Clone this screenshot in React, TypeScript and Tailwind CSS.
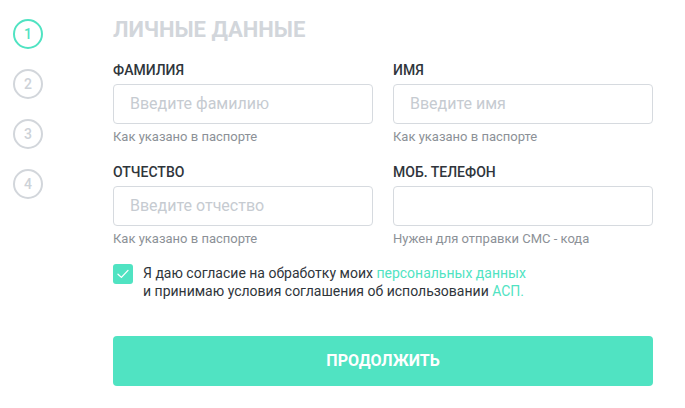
import React from "react";

function Field({ label, placeholder, hint }: { label: string; placeholder: string; hint: string }) {
  return (
    <div className="flex flex-col">
      <div className="text-[14px] leading-[20px] font-medium text-[#2f353b]">{label}</div>
      <div className="mt-[4px] h-[40px] rounded-[4px] border border-[#d6dadf] bg-white flex items-center px-[16px]">
        <span className="text-[16px] text-[#c6cbd1]">{placeholder}</span>
      </div>
      <div className="mt-[5px] text-[13px] leading-[16px] text-[#8c9197]">{hint}</div>
    </div>
  );
}

export default function App() {
  return (
    <div className="w-[685px] h-[408px] bg-white flex font-['Roboto',sans-serif]">
      <div className="w-[113px] shrink-0 pl-[13px] pt-[19px] flex flex-col gap-[20px]">
        <div className="w-[30px] h-[30px] rounded-full border-2 border-[#50e3c2] flex items-center justify-center text-[14px] font-medium text-[#50e3c2]">1</div>
        <div className="w-[30px] h-[30px] rounded-full border-2 border-[#d2d6db] flex items-center justify-center text-[14px] font-medium text-[#cdd2d8]">2</div>
        <div className="w-[30px] h-[30px] rounded-full border-2 border-[#d2d6db] flex items-center justify-center text-[14px] font-medium text-[#cdd2d8]">3</div>
        <div className="w-[30px] h-[30px] rounded-full border-2 border-[#d2d6db] flex items-center justify-center text-[14px] font-medium text-[#cdd2d8]">4</div>
      </div>
      <div className="w-[540px] shrink-0 pt-[18px] flex flex-col">
        <div className="text-[22px] leading-[24px] font-bold text-[#d2d6db]">ЛИЧНЫЕ ДАННЫЕ</div>
        <div className="mt-[18px] grid grid-cols-2 gap-x-[20px] gap-y-[17px]">
          <Field label="ФАМИЛИЯ" placeholder="Введите фамилию" hint="Как указано в паспорте" />
          <Field label="ИМЯ" placeholder="Введите имя" hint="Как указано в паспорте" />
          <Field label="ОТЧЕСТВО" placeholder="Введите отчество" hint="Как указано в паспорте" />
          <Field label="МОБ. ТЕЛЕФОН" placeholder="" hint="Нужен для отправки СМС - кода" />
        </div>
        <div className="mt-[17px] flex items-start gap-[10px]">
          <div className="w-[20px] h-[20px] rounded-[3px] bg-[#50e3c2] flex items-center justify-center shrink-0">
            <svg width="12" height="10" viewBox="0 0 12 10" fill="none">
              <path d="M1 5.2 L4.4 8.4 L11 1.4" stroke="white" strokeWidth="1.3" strokeLinecap="round" strokeLinejoin="round" />
            </svg>
          </div>
          <div className="text-[14px] leading-[18px] text-[#2f353b]">
            Я даю согласие на обработку моих <span className="text-[#50e3c2]">персональных данных</span>
            <br />
            и принимаю условия соглашения об использовании <span className="text-[#50e3c2]">АСП.</span>
          </div>
        </div>
        <button className="mt-[36px] h-[50px] w-full rounded-[4px] bg-[#50e3c2] text-white text-[16px] font-bold">
          ПРОДОЛЖИТЬ
        </button>
      </div>
    </div>
  );
}
